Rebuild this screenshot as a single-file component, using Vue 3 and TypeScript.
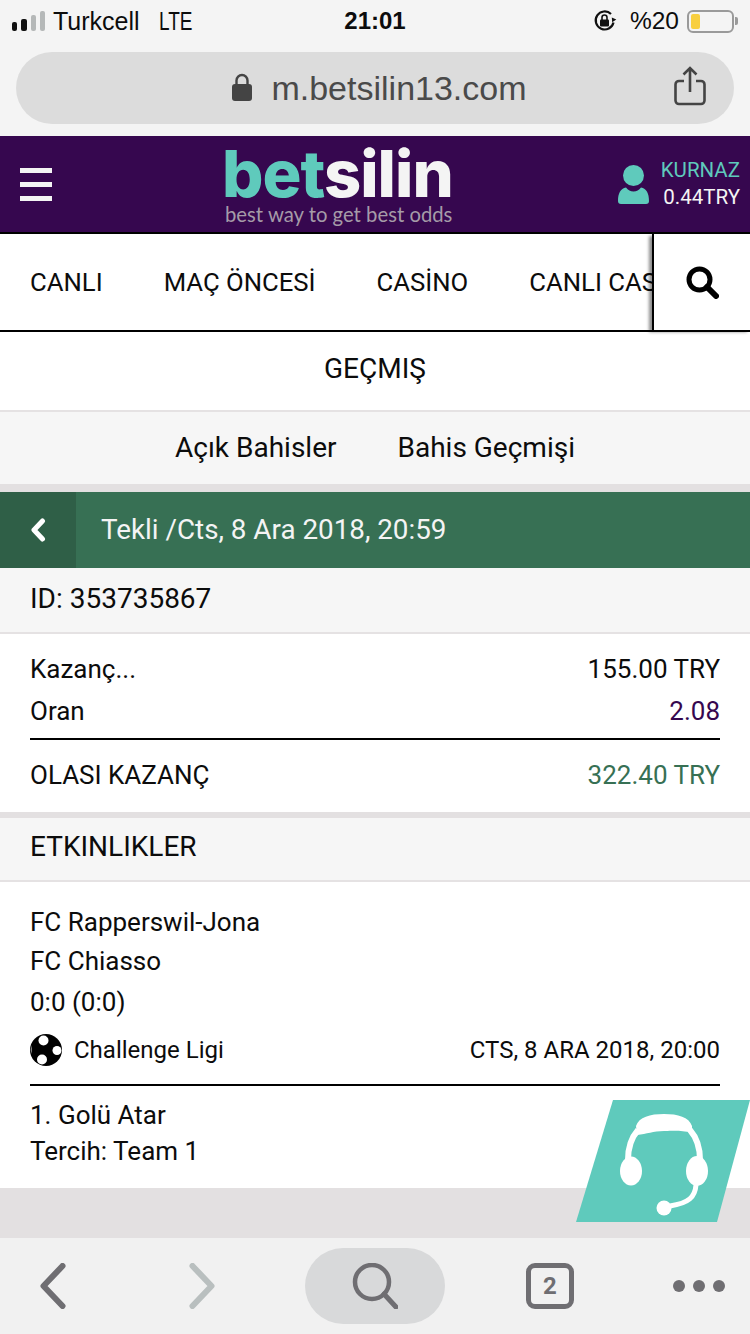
<template>
  <div class="page">
    <div class="browser-top">
      <div class="status-bar">
        <div class="status-left">
          <svg class="signal" width="34" height="22" viewBox="0 0 34 22" aria-hidden="true">
            <rect x="0" y="12" width="5" height="9" rx="2" fill="#111" />
            <rect x="9" y="9" width="6" height="12" rx="2" fill="#111" />
            <rect x="19" y="5" width="5" height="16" rx="2" fill="#b5b8b8" />
            <rect x="28" y="1" width="5" height="20" rx="2" fill="#b5b8b8" />
          </svg>
          <span>Turkcell</span>
          <span class="lte">LTE</span>
        </div>
        <span class="clock">21:01</span>
        <div class="status-right">
          <svg width="24" height="24" viewBox="0 0 24 24" aria-hidden="true">
            <path d="M20.5 13.5A9 9 0 1 1 18 5" fill="none" stroke="#111" stroke-width="2.2" />
            <path d="M18 9l5 .5-3 4z" fill="#111" transform="rotate(20 20 11)" />
            <rect x="7" y="10.5" width="9" height="7" rx="1" fill="#111" />
            <path d="M9 11V8.5a2.5 2.5 0 0 1 5 0V11" fill="none" stroke="#111" stroke-width="1.6" />
          </svg>
          <span class="pct">%20</span>
          <div class="battery"><div class="battery-fill"></div></div>
          <div class="battery-nub"></div>
        </div>
      </div>
      <div class="url-bar">
        <svg class="lock" width="22" height="28" viewBox="0 0 22 28" aria-hidden="true">
          <rect x="1" y="11" width="20" height="17" rx="3" fill="#444" />
          <path d="M5.5 12V7.5a5.5 5.5 0 0 1 11 0V12" fill="none" stroke="#444" stroke-width="2.4" />
        </svg>
        <span class="url-text">m.betsilin13.com</span>
        <svg class="share" width="32" height="40" viewBox="0 0 32 40" fill="none" stroke="#444" stroke-width="2.6" aria-hidden="true">
          <path d="M10 15H5a3.5 3.5 0 0 0-3.5 3.5v16A3.5 3.5 0 0 0 5 38h22a3.5 3.5 0 0 0 3.5-3.5v-16A3.5 3.5 0 0 0 27 15h-5" />
          <path d="M16 26V2M9.5 8.500 16 2l6.500 6.500" />
        </svg>
      </div>
    </div>

    <header class="site-header">
      <div class="burger"><i></i><i></i><i></i></div>
      <div class="logo">
        <div class="logo-name"><span class="teal">bet</span>silin</div>
        <div class="logo-tag">best way to get best odds</div>
      </div>
      <svg class="user-icon" width="33" height="39" viewBox="0 0 33 39" aria-hidden="true">
        <ellipse cx="16.500" cy="10.500" rx="10.500" ry="10.500" fill="#5fcabc" />
        <path d="M9 22.500c2 2.500 4.500 4 7.500 4s5.500-1.500 7.500-4c5.500 1 8 6 8 13.500a3 3 0 0 1-3 3H4a3 3 0 0 1-3-3c0-7.500 2.500-12.500 8-13.500z" fill="#5fcabc" />
      </svg>
      <div class="user-info">
        <span class="user-name">KURNAZ</span>
        <span class="user-balance">0.44TRY</span>
      </div>
    </header>

    <nav class="main-nav">
      <div class="nav-items">
        <span v-for="item in navItems" :key="item" class="nav-item">{{ item }}</span>
      </div>
      <div class="nav-search">
        <svg width="33" height="33" viewBox="0 0 33 33" fill="none" stroke="#000" aria-hidden="true">
          <circle cx="13.500" cy="13.500" r="10.500" stroke-width="5" />
          <path d="M21 21l9 9" stroke-width="6" stroke-linecap="round" />
        </svg>
      </div>
    </nav>

    <div class="page-title">GEÇMIŞ</div>

    <div class="sub-tabs">
      <span>Açık Bahisler</span>
      <span>Bahis Geçmişi</span>
    </div>

    <div class="bet-title">
      <div class="back-cell">
        <svg width="16" height="24" viewBox="0 0 16 24" fill="none" stroke="#fff" stroke-width="5" stroke-linecap="round" stroke-linejoin="round" aria-hidden="true">
          <path d="M12.500 3 4 12l8.500 9" />
        </svg>
      </div>
      <span class="bet-title-text">Tekli /Cts, 8 Ara 2018, 20:59</span>
    </div>

    <div class="id-row">ID: 353735867</div>

    <section class="summary">
      <div class="summary-rows">
        <div class="row"><span>Kazanç...</span><span>155.00 TRY</span></div>
        <div class="row"><span>Oran</span><span class="purple">2.08</span></div>
      </div>
      <div class="row total"><span>OLASI KAZANÇ</span><span class="green">322.40 TRY</span></div>
    </section>

    <div class="section-head">ETKINLIKLER</div>

    <section class="event">
      <div class="event-teams">
        <div class="team">FC Rapperswil-Jona</div>
        <div class="team">FC Chiasso</div>
        <div class="score">0:0 (0:0)</div>
      </div>
      <div class="league-row">
        <div class="league">
          <svg width="32" height="32" viewBox="0 0 32 32" aria-hidden="true">
            <circle cx="16" cy="16" r="16" fill="#000" />
            <circle cx="13.500" cy="6.500" r="5" fill="#fff" />
            <circle cx="27" cy="16.500" r="4.500" fill="#fff" />
            <circle cx="12" cy="25.500" r="5" fill="#fff" />
            <path d="M1.500 11a16 16 0 0 0 0 9z" fill="#fff" />
          </svg>
          <span>Challenge Ligi</span>
        </div>
        <span class="event-date">CTS, 8 ARA 2018, 20:00</span>
      </div>
      <div class="pick">
        <div>1. Golü Atar</div>
        <div>Tercih: Team 1</div>
      </div>
    </section>

    <div class="filler"></div>

    <div class="toolbar">
      <svg width="26" height="46" viewBox="0 0 26 46" fill="none" stroke="#6f6e72" stroke-width="6" stroke-linecap="round" stroke-linejoin="round" aria-hidden="true">
        <path d="M22.500 3 3.500 23l19 20" />
      </svg>
      <svg width="26" height="46" viewBox="0 0 26 46" fill="none" stroke="#b9bfbf" stroke-width="6" stroke-linecap="round" stroke-linejoin="round" aria-hidden="true">
        <path d="M3.500 3l19 20-19 20" />
      </svg>
      <div class="toolbar-search">
        <svg width="46" height="46" viewBox="0 0 46 46" fill="none" stroke="#6f6e72" aria-hidden="true">
          <circle cx="20" cy="19" r="17" stroke-width="4.500" />
          <path d="M32 31l12 13" stroke-width="5" stroke-linecap="round" />
        </svg>
      </div>
      <div class="tabs-count">2</div>
      <div class="more"><i></i><i></i><i></i></div>
    </div>

    <svg class="support" width="175" height="122" viewBox="0 0 175 122" aria-hidden="true">
      <polygon points="38,0 175,0 142,122 1,122" fill="#5fcabc" />
      <path d="M53 60C53 48 56 38 63 30M125 60C125 48 122 38 115 30" fill="none" stroke="#fff" stroke-width="6" />
      <path d="M61 26C64 17 75 14 89 14S114 17 117 26V33C105 30 100 31 89 31S72 34 62 35Z" fill="#fff" />
      <ellipse cx="56" cy="71" rx="11" ry="14.500" fill="#fff" />
      <ellipse cx="122" cy="71" rx="11" ry="15" fill="#fff" />
      <path d="M121 85C120 97 114 103 95 106" fill="none" stroke="#fff" stroke-width="5" />
      <circle cx="89" cy="108" r="7.500" fill="#fff" />
    </svg>
  </div>
</template>

<script setup lang="ts">
const navItems: string[] = ['CANLI', 'MAÇ ÖNCESİ', 'CASİNO', 'CANLI CASİNO']
</script>

<style>
html,
body {
  margin: 0;
  padding: 0;
  background: #fff;
}
</style>

<style scoped>
.page {
  position: relative;
  display: flex;
  flex-direction: column;
  width: 750px;
  height: 1334px;
  overflow: hidden;
  font-family: Roboto, "Liberation Sans", sans-serif;
  font-size: 26px;
  color: #0c0c0c;
  background: #fff;
}

.browser-top {
  height: 136px;
  box-sizing: border-box;
  padding-top: 6px;
  background: #f4f4f4;
}

.status-bar {
  display: grid;
  grid-template-columns: 1fr auto 1fr;
  align-items: center;
  height: 30px;
  padding: 0 12px;
  font-family: "Liberation Sans", Arial, sans-serif;
  font-size: 25px;
}

.status-left {
  display: flex;
  align-items: center;
}

.signal {
  margin-right: 7px;
}

.lte {
  display: inline-block;
  margin-left: 19px;
  transform: scaleX(0.76);
  transform-origin: left center;
}

.clock {
  font-size: 24px;
  font-weight: 700;
}

.status-right {
  display: flex;
  align-items: center;
  justify-content: flex-end;
}

.pct {
  margin: 0 8px 0 13px;
  font-size: 24.500px;
}

.battery {
  width: 47px;
  height: 23px;
  box-sizing: border-box;
  padding: 2px;
  border: 2px solid #9a9a9a;
  border-radius: 6px;
}

.battery-fill {
  width: 9px;
  height: 100%;
  border-radius: 2px;
  background: #f8cf40;
}

.battery-nub {
  width: 3px;
  height: 8px;
  margin-left: 1px;
  background: #9a9a9a;
  border-radius: 0 2px 2px 0;
}

.url-bar {
  position: relative;
  display: flex;
  align-items: center;
  justify-content: center;
  height: 72px;
  margin: 16px 16px 0;
  padding-left: 8px;
  border-radius: 36px;
  background: #dcdcdc;
}

.lock {
  margin: -2px 18px 0 0;
}

.url-text {
  font-family: "Liberation Sans", Arial, sans-serif;
  font-size: 34px;
  color: #4a4a4a;
}

.share {
  position: absolute;
  right: 28px;
  top: 14px;
}

.site-header {
  display: flex;
  align-items: center;
  height: 96px;
  padding: 0 10px 0 20px;
  border-bottom: 2px solid #000;
  background: #36074f;
}

.burger {
  display: flex;
  flex-direction: column;
  gap: 9px;
  width: 32px;
}

.burger i {
  display: block;
  height: 5px;
  background: #f4f4f4;
}

.logo {
  margin-left: 170px;
  margin-right: auto;
}

.logo-name {
  font-family: Inter, "Liberation Sans", sans-serif;
  font-size: 65px;
  font-weight: 800;
  line-height: 60px;
  letter-spacing: -1px;
  color: #f4f4f4;
}

.teal {
  color: #5fcabc;
}

.logo-tag {
  padding-left: 3px;
  font-family: Lato, "Liberation Sans", sans-serif;
  font-size: 20.300px;
  line-height: 20px;
  color: #a59ba8;
}

.user-icon {
  margin-right: 11px;
}

.user-info {
  display: flex;
  flex-direction: column;
  align-items: flex-end;
  gap: 4px;
  font-size: 20.500px;
  line-height: 23px;
}

.user-name {
  color: #5fcabc;
}

.user-balance {
  color: #f4f4f4;
}

.main-nav {
  position: relative;
  display: flex;
  height: 96px;
  border-bottom: 2px solid #000;
}

.nav-items {
  display: flex;
  align-items: center;
  gap: 61px;
  flex: 1;
  min-width: 0;
  padding-left: 30px;
  overflow: hidden;
}

.nav-item {
  flex: none;
  font-size: 25.700px;
}

.nav-search {
  display: flex;
  align-items: center;
  justify-content: center;
  flex: none;
  width: 96px;
  border-left: 2px solid #000;
  background: #fff;
  box-shadow: -3px 2px 3px rgba(0, 0, 0, 0.45);
}

.page-title {
  height: 78px;
  line-height: 74px;
  font-size: 28px;
  text-align: center;
  border-bottom: 2px solid #e5e2e3;
}

.sub-tabs {
  display: flex;
  justify-content: center;
  align-items: center;
  gap: 61px;
  height: 70px;
  padding-bottom: 2px;
  font-size: 28px;
  border-bottom: 8px solid #e3e0e1;
  background: #f6f6f6;
}

.bet-title {
  display: flex;
  align-items: center;
  height: 76px;
  font-size: 27.800px;
  color: #f4f4f4;
  background: #377054;
}

.back-cell {
  display: flex;
  align-items: center;
  height: 100%;
  width: 76px;
  box-sizing: border-box;
  padding-left: 30px;
  background: #2f5f47;
}

.bet-title-text {
  margin: -2px 0 0 25px;
}

.id-row {
  height: 64px;
  padding-left: 30px;
  font-size: 28px;
  line-height: 62px;
  border-bottom: 2px solid #e5e2e3;
  background: #f6f6f6;
}

.summary {
  padding: 0 30px;
  border-bottom: 6px solid #e3e0e1;
}

.summary-rows {
  padding: 14px 0 6px;
  border-bottom: 2px solid #000;
}

.row {
  display: flex;
  justify-content: space-between;
  align-items: center;
  height: 42px;
}

.total {
  height: 70px;
  padding-bottom: 2px;
}

.purple {
  color: #36074f;
}

.green {
  color: #377054;
}

.section-head {
  height: 62px;
  padding-left: 30px;
  font-size: 28px;
  line-height: 58px;
  border-bottom: 2px solid #e5e2e3;
  background: #f6f6f6;
}

.event {
  padding: 21px 30px 0;
  height: 306px;
  box-sizing: border-box;
}

.team {
  height: 39px;
  line-height: 39px;
}

.score {
  height: 41px;
  line-height: 41px;
  margin-top: 1px;
}

.league-row {
  display: flex;
  justify-content: space-between;
  align-items: center;
  height: 63px;
  box-sizing: border-box;
  padding-bottom: 8px;
  border-bottom: 2px solid #000;
  font-size: 24px;
}

.league {
  display: flex;
  align-items: center;
  gap: 12px;
}

.pick {
  padding-top: 11px;
  line-height: 36px;
}

.filler {
  flex: 1;
  background: #e3e0e1;
}

.toolbar {
  display: flex;
  align-items: center;
  height: 96px;
  padding: 0 25px 0 40px;
  background: #f1f1f1;
}

.toolbar > svg:nth-child(2) {
  margin-left: 123px;
}

.toolbar-search {
  display: flex;
  align-items: center;
  justify-content: center;
  width: 140px;
  height: 76px;
  margin-left: 90px;
  border-radius: 38px;
  background: #d8d9da;
}

.tabs-count {
  width: 48px;
  height: 46px;
  box-sizing: border-box;
  margin-left: 81px;
  border: 5px solid #6f6e72;
  border-radius: 9px;
  text-align: center;
  line-height: 36px;
  font-size: 24px;
  font-weight: 700;
  color: #6f6e72;
}

.more {
  display: flex;
  gap: 8px;
  margin-left: auto;
}

.more i {
  display: block;
  width: 12px;
  height: 12px;
  border-radius: 50%;
  background: #6f6e72;
}

.support {
  position: absolute;
  left: 575px;
  top: 1100px;
}
</style>
